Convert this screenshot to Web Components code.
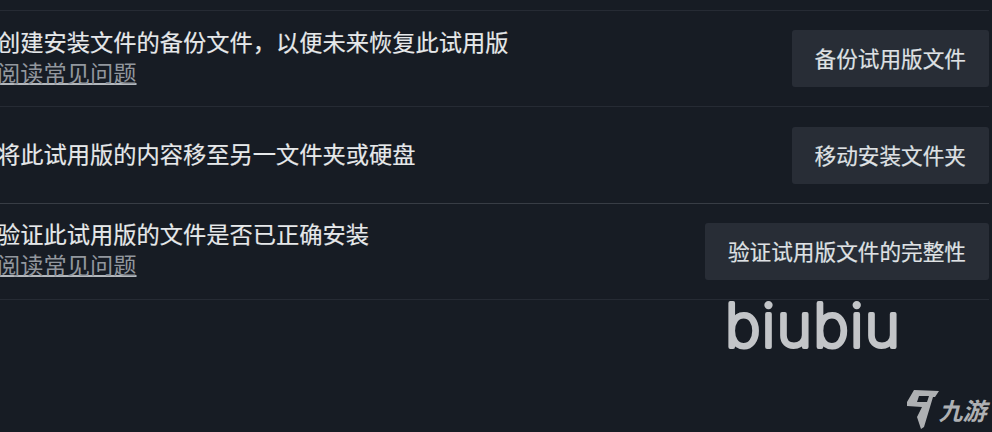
<!DOCTYPE html>
<html lang="zh-CN"><head><meta charset="utf-8"><title>试用版文件</title>
<style>
html,body{margin:0;height:100%;background:#171c24;overflow:hidden}
body{font-family:"Noto Sans CJK SC","Liberation Sans",sans-serif}
</style></head><body>
<file-panel>
<file-row title-text="创建安装文件的备份文件，以便未来恢复此试用版" link="阅读常见问题" action="备份试用版文件"></file-row>
<file-row title-text="将此试用版的内容移至另一文件夹或硬盘" action="移动安装文件夹" strong></file-row>
<file-row title-text="验证此试用版的文件是否已正确安装" link="阅读常见问题" action="验证试用版文件的完整性"></file-row>
</file-panel>
<biu-mark></biu-mark>
<nine-mark></nine-mark>
<script>
class FilePanel extends HTMLElement{constructor(){super();this.attachShadow({mode:'open'}).innerHTML=`<style>
:host{display:block;box-sizing:border-box;width:992px;height:432px;padding:10px 3px 0 0;background:#171c24}
.list{border-top:1px solid #262b34}
</style><div class="list"><slot></slot></div>`}}
class FileRow extends HTMLElement{connectedCallback(){
const t=this.getAttribute('title-text'),l=this.getAttribute('link'),a=this.getAttribute('action');
const line=this.hasAttribute('strong')?'#383d45':'#262b34';
this.attachShadow({mode:'open'}).innerHTML=`<style>
:host{display:flex;box-sizing:border-box;height:96.4px;align-items:center;justify-content:space-between;border-bottom:1px solid ${line};font-family:"Noto Sans CJK SC","Liberation Sans",sans-serif}
.text{margin-left:-3px;padding-bottom:4px;display:flex;flex-direction:column;font-size:23.25px;line-height:31px;color:#e6e8ea;-webkit-text-stroke:.15px #e6e8ea}
a{color:#92979e;-webkit-text-stroke:0;text-decoration:underline;text-decoration-color:#b4b8bd;text-underline-offset:1px}
button{all:unset;box-sizing:border-box;height:57px;padding:0 23px 2px;background:#282d36;border-radius:3px;font-size:21.65px;color:#dfe1e4;-webkit-text-stroke:.2px #dfe1e4;display:flex;align-items:center}
</style><div class="text"><span>${t}</span>${l?`<a>${l}</a>`:''}</div><button>${a}</button>`}}
class BiuMark extends HTMLElement{constructor(){super();this.attachShadow({mode:'open'}).innerHTML=`<style>
:host{position:absolute;left:720px;top:295px;display:block;width:185px;height:60px}
svg{display:block;width:185px;height:60px}
text{font-family:Inter,Lato,sans-serif;font-weight:200;font-size:60px;fill:#c3c5c8;stroke:#c3c5c8;stroke-width:4px;stroke-linejoin:round}
</style><svg viewBox="0 0 185 60"><text x="5" y="52" textLength="175" lengthAdjust="spacing">biubiu</text></svg>`}}
class NineMark extends HTMLElement{constructor(){super();this.attachShadow({mode:'open'}).innerHTML=`<style>
:host{position:absolute;left:906px;top:389px;display:flex;align-items:flex-end;gap:1px}
svg{width:34px;height:41px;display:block}
span{font:700 24px/28px "Noto Sans CJK SC",sans-serif;color:#aeb0b3;margin-bottom:6px;white-space:nowrap;transform:skewX(-14deg)}
</style><svg viewBox="906 389 34 41" aria-hidden="true"><path fill="#aeb0b3" fill-rule="evenodd" d="M914 390L939 391L935 397L933 397L924 427L921 429L917 417L922 407L907 406L907 402ZM919 396L929 396L927 402L917 402Z"/></svg><span>九游</span>`}}
customElements.define('file-panel',FilePanel);
customElements.define('file-row',FileRow);
customElements.define('biu-mark',BiuMark);
customElements.define('nine-mark',NineMark);
</script>
</body></html>
